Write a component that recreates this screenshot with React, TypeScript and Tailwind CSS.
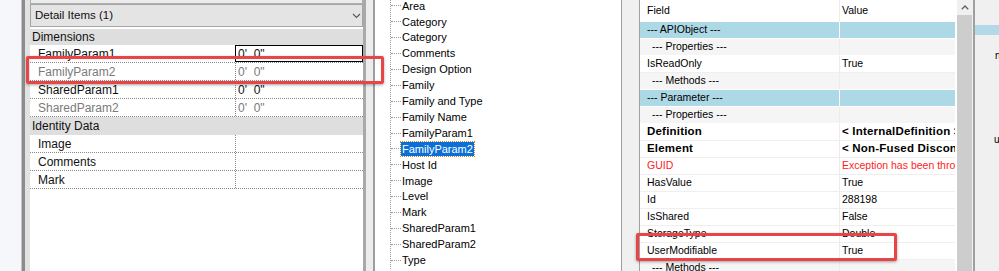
import React from "react";

const treeItems = [
  "Area",
  "Category",
  "Category",
  "Comments",
  "Design Option",
  "Family",
  "Family and Type",
  "Family Name",
  "FamilyParam1",
  "FamilyParam2",
  "Host Id",
  "Image",
  "Level",
  "Mark",
  "SharedParam1",
  "SharedParam2",
  "Type",
];

type Kind = "group" | "section" | "plain" | "bold" | "error";

const gridRows: { field: string; value?: string; kind: Kind }[] = [
  { field: "--- APIObject ---", kind: "group" },
  { field: "--- Properties ---", kind: "section" },
  { field: "IsReadOnly", value: "True", kind: "plain" },
  { field: "--- Methods ---", kind: "section" },
  { field: "--- Parameter ---", kind: "group" },
  { field: "--- Properties ---", kind: "section" },
  { field: "Definition", value: "< InternalDefinition >", kind: "bold" },
  { field: "Element", value: "< Non-Fused Discontinuous Footing >", kind: "bold" },
  { field: "GUID", value: "Exception has been thrown by the target of an invocation.", kind: "error" },
  { field: "HasValue", value: "True", kind: "plain" },
  { field: "Id", value: "288198", kind: "plain" },
  { field: "IsShared", value: "False", kind: "plain" },
  { field: "StorageType", value: "Double", kind: "plain" },
  { field: "UserModifiable", value: "True", kind: "plain" },
  { field: "--- Methods ---", kind: "section" },
];

const propRows: { name: string; value: string; readOnly?: boolean; editing?: boolean }[] = [
  { name: "FamilyParam1", value: "0'  0\"", editing: true },
  { name: "FamilyParam2", value: "0'  0\"", readOnly: true },
  { name: "SharedParam1", value: "0'  0\"" },
  { name: "SharedParam2", value: "0'  0\"", readOnly: true },
];

function PropRow({ name, value, readOnly, editing }: { name: string; value: string; readOnly?: boolean; editing?: boolean }) {
  return (
    <div className="flex h-[18px] border-b border-dotted border-[#8a8a8a] bg-white">
      <div className={`w-[205px] pl-[8px] flex items-center whitespace-nowrap ${readOnly ? "text-[#7a7a7a]" : "text-[#111]"}`}>
        {name}
      </div>
      <div
        className={`flex-1 flex items-center pl-[2px] whitespace-pre ${
          editing ? "border border-black" : "border-l border-dotted border-[#8a8a8a]"
        } ${readOnly ? "text-[#7a7a7a]" : "text-[#111]"}`}
      >
        {value}
      </div>
    </div>
  );
}

function Header({ label, h }: { label: string; h: string }) {
  return (
    <div className={`${h} bg-[#dedede] pl-[2px] flex items-center text-[#111]`}>{label}</div>
  );
}

export default function App() {
  return (
    <div
      className="w-[999px] h-[271px] overflow-hidden relative flex bg-white"
      style={{ fontFamily: "'Liberation Sans', Arial, sans-serif" }}
    >
      {/* far left edge */}
      <div className="w-[21px] shrink-0 bg-[#f6f7fa]" />
      <div className="w-[4px] shrink-0 bg-[#8c8c8c] border-l border-[#c4c4c4]" />
      <div className="w-[5px] shrink-0 bg-[#e2e2e2]" />

      {/* Revit properties */}
      <div className="w-[333px] shrink-0 flex flex-col bg-white text-[12px]">
        <div className="h-[4px] bg-[#ececec] border-x border-b border-[#b0b0b0]" />
        <div className="h-[23px] border border-[#a6a6a6] bg-[#e4e4e4] flex items-center justify-between pl-[4px] pr-[1px] text-[11.5px] text-[#111]">
          <span>Detail Items (1)</span>
          <svg width="9" height="6" viewBox="0 0 9 6" className="mt-[1px]">
            <path d="M1 1 L4.5 4.5 L8 1" fill="none" stroke="#555" strokeWidth="1.1" />
          </svg>
        </div>
        <div className="h-[2px]" />
        <Header label="Dimensions" h="h-[16px]" />
        {propRows.map((r, i) => (
          <PropRow key={i} {...r} />
        ))}
        <Header label="Identity Data" h="h-[18px]" />
        <PropRow name="Image" value="" />
        <PropRow name="Comments" value="" />
        <PropRow name="Mark" value="" />
      </div>

      <div className="w-[3px] shrink-0 bg-[#a9a9a9]" />
      <div className="w-[7px] shrink-0 bg-[#ececec]" />
      <div className="w-[2px] shrink-0 bg-[#9d9d9d]" />

      {/* tree */}
      <div className="w-[246px] shrink-0 bg-white pl-[15px] text-[11px] text-black">
        <div className="h-full border-l border-dotted border-[#9a9a9a] -mt-[2px]">
          {treeItems.map((t, i) => (
            <div key={i} className="h-[15.9px] flex items-center">
              <div className="w-[10px] border-t border-dotted border-[#9a9a9a]" />
              {t === "FamilyParam2" ? (
                <span className="bg-[#0a6fd6] text-white px-[1px] leading-[14px] outline outline-1 outline-dotted outline-[#c28a2e]">
                  {t}
                </span>
              ) : (
                <span className="px-[1px] whitespace-nowrap">{t}</span>
              )}
            </div>
          ))}
        </div>
      </div>

      <div className="w-[1px] shrink-0 bg-[#a0a0a0]" />
      <div className="w-[17px] shrink-0 bg-[#f0f0f0]" />
      <div className="w-[1px] shrink-0 bg-[#a0a0a0]" />

      {/* property grid */}
      <div className="w-[317px] shrink-0 bg-white pr-[2px] text-[10.5px] text-black">
        <div className="h-[22px] flex">
          <div className="w-[200px] pl-[7px] flex items-center border-r border-[#ececec]">Field</div>
          <div className="flex-1 pl-[2px] flex items-center">Value</div>
        </div>
        {gridRows.map((r, i) => {
          const bg =
            r.kind === "group" ? "bg-[#add8e6]" : r.kind === "section" ? "bg-[#f5f5f5]" : "bg-white";
          const line = r.kind === "group" || r.kind === "section" ? "border-white" : "border-[#efefef]";
          const color = r.kind === "error" ? "text-[#ff1c1c]" : "text-black";
          const weight = r.kind === "bold" ? "font-bold text-[11.5px] tracking-[0.2px]" : "";
          return (
            <div key={i} className={`h-[17px] flex border-b ${line} ${color} ${weight}`}>
              <div
                className={`w-[200px] flex items-center whitespace-nowrap border-r ${
                  r.kind === "group" ? "border-white" : "border-[#ececec]"
                } ${r.kind === "section" ? "pl-[12px]" : "pl-[7px]"} ${bg}`}
              >
                {r.field}
              </div>
              <div className={`flex-1 flex items-center pl-[2px] whitespace-nowrap overflow-hidden ${bg}`}>
                {r.value}
              </div>
            </div>
          );
        })}
      </div>

      {/* scrollbar */}
      <div className="w-[15px] shrink-0 flex flex-col">
        <div className="h-[15px] bg-[#f0f0f0] flex items-center justify-center">
          <svg width="8" height="5" viewBox="0 0 8 5">
            <path d="M0.8 4.2 L4 1 L7.2 4.2" fill="none" stroke="#606060" strokeWidth="1.3" />
          </svg>
        </div>
        <div className="flex-1 bg-[#cdcdcd]" />
      </div>

      <div className="w-[1px] shrink-0 bg-[#f0f0f0]" />
      <div className="w-[2px] shrink-0 bg-[#a0a0a0]" />

      {/* partial next panel, mostly off-screen */}
      <div className="w-[24px] shrink-0 bg-[#f0f0f0] flex flex-col overflow-hidden text-[10px] text-black">
        <div className="h-[25px]" />
        <div className="h-[10px] bg-[#b3d9e8]" />
        <div className="h-[14px]" />
        <div className="pl-[20px] h-[14px] leading-[14px]">n</div>
        <div className="h-[70px]" />
        <div className="pl-[19px] h-[14px] leading-[14px]">u</div>
      </div>

      {/* red annotation boxes */}
      <div className="absolute left-[26px] top-[56px] w-[358px] h-[28px] border-[3px] border-[#e84646] rounded-[2px] shadow-[0_1px_3px_rgba(0,0,0,0.35)]" />
      <div className="absolute left-[636px] top-[233px] w-[261px] h-[28px] border-[3px] border-[#e84646] rounded-[2px] shadow-[0_1px_3px_rgba(0,0,0,0.35)]" />
    </div>
  );
}
